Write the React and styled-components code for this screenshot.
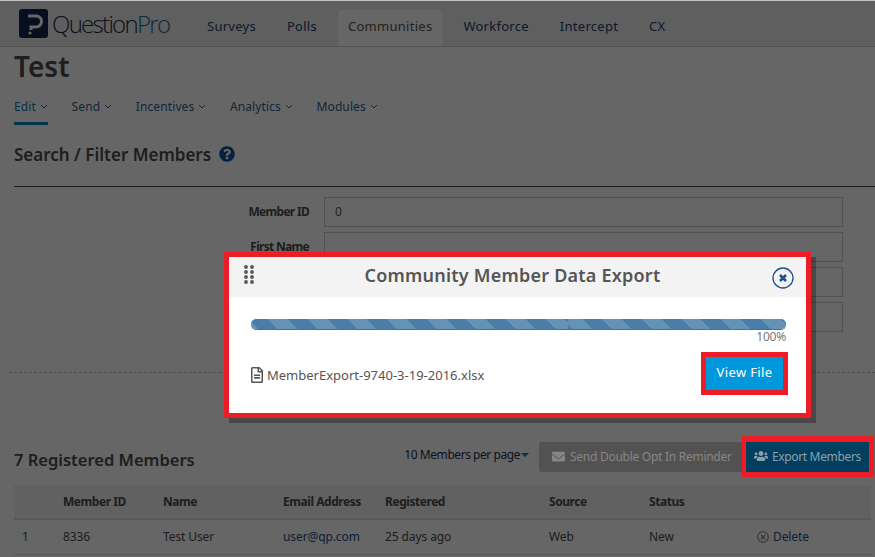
import React from 'react';
import styled, { createGlobalStyle } from 'styled-components';
import { FaEnvelope, FaQuestionCircle, FaRegFileAlt, FaRegTimesCircle, FaUsers } from 'react-icons/fa';

const GlobalStyle = createGlobalStyle`
  html, body {
    margin: 0;
    padding: 0;
    height: 100%;
    overflow: hidden;
    background: #666;
  }
  * {
    box-sizing: border-box;
  }
  body {
    font-family: "Noto Sans", "Open Sans", sans-serif;
    font-size: 12px;
    color: #3a3a3a;
  }
`;

const Page = styled.div`
  position: relative;
  width: 875px;
  height: 557px;
  overflow: hidden;
  background: #fff;
`;

const Content = styled.div`
  width: 875px;
`;

const TopEdge = styled.div`
  position: absolute;
  left: 0;
  top: 0;
  z-index: 2;
  width: 100%;
  height: 1px;
  background: #c4c4c4;
`;

const TopNav = styled.div`
  height: 46px;
  margin-top: 1px;
  display: flex;
  align-items: flex-end;
  padding-left: 19px;
  background: #eeeeee;
  border-bottom: 1px solid #cfcfcf;
`;

const Logo = styled.div`
  display: flex;
  align-items: center;
  width: 178px;
  height: 37px;
  padding-bottom: 9px;
  font-family: "Open Sans", sans-serif;
  font-size: 24px;
  font-weight: 300;
  letter-spacing: -1.7px;
  color: #1b2a4a;
  span {
    color: #1b6a9c;
  }
  svg {
    margin-right: 4px;
    flex-shrink: 0;
  }
`;

const NavItem = styled.div`
  height: 36px;
  padding: 0 10px 5px;
  margin-right: 11px;
  display: flex;
  align-items: center;
  font-size: 13px;
  letter-spacing: 0.27px;
  color: ${p => (p.$active ? '#555' : '#1d3f6e')};
  background: ${p => (p.$active ? '#fff' : 'transparent')};
  border-radius: 4px 4px 0 0;
`;

const Title = styled.h1`
  margin: 0;
  padding: 2px 0 0 14px;
  height: 40px;
  font-size: 28px;
  line-height: 34px;
  font-weight: 600;
  color: #4b4b4b;
`;

const SubNav = styled.div`
  display: flex;
  gap: 23.7px;
  height: 38px;
  padding: 0 0 0 14px;
`;

const SubItem = styled.div`
  height: 38px;
  display: flex;
  align-items: center;
  gap: 4px;
  padding-top: 3px;
  font-size: 12px;
  letter-spacing: 0.1px;
  color: ${p => (p.$active ? '#0f7ab5' : '#2f5e8e')};
  border-bottom: ${p => (p.$active ? '3px solid #0d80ba' : '3px solid transparent')};
`;

const SectionHead = styled.div`
  height: 62px;
  margin-left: 14px;
  display: flex;
  align-items: center;
  gap: 8px;
  border-bottom: 1px solid #444;
  padding-bottom: 3px;
  font-size: 17px;
  font-weight: 600;
  color: #4b4b4b;
  svg {
    color: #0f4f9c;
  }
`;

const Form = styled.div`
  display: flex;
  flex-direction: column;
  gap: 5px;
  margin-left: 9px;
  padding: 10px 32px 0 0;
  height: 186px;
  border-bottom: 1px dashed #c4c4c4;
`;

const FormRow = styled.div`
  display: flex;
  justify-content: flex-end;
  align-items: center;
  gap: 15px;
  height: 30px;
`;

const FieldLabel = styled.label`
  margin-top: -1px;
  font-size: 12px;
  font-weight: 700;
  letter-spacing: -0.7px;
  color: #4b4b4b;
`;

const Field = styled.div`
  width: 519px;
  height: 30px;
  padding: 5px 10px;
  border: 1px solid #ccc;
  font-size: 12px;
  line-height: 18px;
  color: #555;
`;

const MembersBar = styled.div`
  display: flex;
  align-items: center;
  height: 41px;
  margin-top: 63px;
  padding: 0 1px 0 14px;
`;

const MembersTitle = styled.h2`
  flex: 1;
  margin: 5px 0 0;
  font-size: 16.5px;
  font-weight: 600;
  color: #4b4b4b;
`;

const PerPage = styled.div`
  display: flex;
  align-items: center;
  margin: 0 10px 4px 0;
  font-size: 12px;
  letter-spacing: -0.45px;
  color: #1a3050;
  &::after {
    content: '';
    margin-left: 1px;
    border: 4px solid transparent;
    border-top-color: #0d80ba;
    border-bottom: 0;
  }
`;

const ReminderButton = styled.div`
  position: relative;
  z-index: 2;
  display: flex;
  align-items: center;
  gap: 5px;
  width: 203px;
  height: 30px;
  padding: 0 0 1px 13px;
  background: #525252;
  border-radius: 3px 0 0 3px;
  font-size: 12px;
  letter-spacing: -0.27px;
  color: #868686;
  white-space: nowrap;
`;

const ExportOutline = styled.div`
  position: relative;
  z-index: 2;
  border: 5px solid #ee1c25;
  border-width: 6px 5px 5px 4px;
  width: 132px;
  height: 41px;
`;

const ExportButton = styled.div`
  height: 100%;
  display: flex;
  align-items: center;
  gap: 4px;
  padding: 0 0 2px 8px;
  background: #003f5f;
  font-size: 12px;
  letter-spacing: -0.35px;
  color: #8aa0ae;
  white-space: nowrap;
`;

const Grid = styled.div`
  margin: 8px 4px 0 14px;
  font-size: 12px;
`;

const GridRow = styled.div`
  display: grid;
  grid-template-columns: 49px 100px 120px 102px 164px 100px 108px 1fr;
  align-items: center;
  height: 35px;
  padding-bottom: ${p => (p.$head ? 0 : 1)}px;
  background: ${p => (p.$head ? '#f2f2f2' : 'transparent')};
  border-bottom: ${p => (p.$head ? '2px solid #ddd' : '1px solid #ddd')};
  font-weight: ${p => (p.$head ? 700 : 400)};
  letter-spacing: ${p => (p.$head ? '-0.45px' : '-0.1px')};
  color: #4b4b4b;
`;

const FirstCell = styled.div`
  padding-left: 8px;
`;

const LinkCell = styled.div`
  display: flex;
  align-items: center;
  gap: 4px;
  color: #1d4f85;
  svg {
    color: #888;
  }
`;

const Backdrop = styled.div`
  position: absolute;
  inset: 0;
  background: rgba(0, 0, 0, 0.6);
`;

const Modal = styled.div`
  position: absolute;
  z-index: 3;
  left: 224px;
  top: 252px;
  width: 587px;
  height: 166px;
  border: 5px solid #ee1c25;
  background: #fff;
  box-shadow: 5px 5px 0 rgba(0, 0, 0, 0.28);
`;

const ModalHead = styled.div`
  position: relative;
  height: 40px;
  display: flex;
  align-items: center;
  justify-content: center;
  padding: 0 10px 4px 0;
  background: #f3f3f3;
  font-size: 18px;
  font-weight: 600;
  letter-spacing: 0.22px;
  color: #555;
`;

const DragHandle = styled.svg`
  position: absolute;
  left: 15px;
  top: 8px;
`;

const CloseIcon = styled.svg`
  position: absolute;
  right: 12px;
  top: 10px;
`;

const ModalBody = styled.div`
  padding: 22px 20px 0 22px;
`;

const Progress = styled.div`
  display: flex;
  height: 11px;
  overflow: hidden;
  border-radius: 5px;
  border-bottom: 1px solid #3d7199;
`;

const ProgressPart = styled.div`
  flex: ${p => (p.$second ? '1' : '0 0 317px')};
  background: ${p =>
    p.$second
      ? 'repeating-linear-gradient(45deg, #4a7ea8 0 3px, #6593b5 3px 17px, #4a7ea8 17px 28px)'
      : 'repeating-linear-gradient(45deg, #6593b5 0 5px, #4a7ea8 5px 19px, #6593b5 19px 28px)'};
`;

const Percent = styled.div`
  text-align: right;
  font-size: 12px;
  line-height: 14px;
  letter-spacing: -0.2px;
  color: #777;
`;

const FileRow = styled.div`
  display: flex;
  align-items: center;
  justify-content: space-between;
  margin-top: 8px;
`;

const FileName = styled.div`
  display: flex;
  align-items: center;
  gap: 2px;
  margin-top: 2px;
  font-size: 13px;
  color: #555;
  svg {
    flex-shrink: 0;
    margin-left: -2px;
  }
`;

const ViewOutline = styled.div`
  width: 87px;
  height: 43px;
  margin-right: -2px;
  border: 5px solid #ee1c25;
`;

const ViewButton = styled.div`
  height: 100%;
  display: flex;
  align-items: center;
  justify-content: center;
  padding-bottom: 3px;
  background: #0098dc;
  color: #fff;
  font-size: 13px;
  letter-spacing: 0.35px;
`;

const Chevron = () => (
  <svg width="8" height="5" viewBox="0 0 8 5" fill="none" stroke="currentColor" strokeWidth="1">
    <path d="M1 1l3 3 3-3" />
  </svg>
);

const subItems = [
  { label: 'Edit', active: true },
  { label: 'Send' },
  { label: 'Incentives' },
  { label: 'Analytics' },
  { label: 'Modules' },
];

export default function App() {
  return (
    <Page>
      <GlobalStyle />
      <TopEdge />
      <Content>
        <TopNav>
          <Logo>
            <svg width="29" height="29" viewBox="0 0 29 29">
              <rect width="29" height="29" rx="3" fill="#12254f" />
              <path d="M9 7h8a5 5 0 0 1 0 11h-5v3" fill="none" stroke="#fff" strokeWidth="3" />
              <circle cx="11" cy="24" r="1.6" fill="#fff" />
            </svg>
            Question<span>Pro</span>
          </Logo>
          <NavItem>Surveys</NavItem>
          <NavItem>Polls</NavItem>
          <NavItem $active>Communities</NavItem>
          <NavItem>Workforce</NavItem>
          <NavItem>Intercept</NavItem>
          <NavItem>CX</NavItem>
        </TopNav>
        <Title>Test</Title>
        <SubNav>
          {subItems.map(item => (
            <SubItem key={item.label} $active={item.active}>
              {item.label}
              <Chevron />
            </SubItem>
          ))}
        </SubNav>
        <SectionHead>
          Search / Filter Members
          <FaQuestionCircle size={16} />
        </SectionHead>
        <Form>
          <FormRow>
            <FieldLabel>Member ID</FieldLabel>
            <Field>0</Field>
          </FormRow>
          <FormRow>
            <FieldLabel>First Name</FieldLabel>
            <Field />
          </FormRow>
          <FormRow>
            <FieldLabel>Last Name</FieldLabel>
            <Field />
          </FormRow>
          <FormRow>
            <FieldLabel>Email</FieldLabel>
            <Field />
          </FormRow>
        </Form>
        <MembersBar>
          <MembersTitle>7 Registered Members</MembersTitle>
          <PerPage>10 Members per page</PerPage>
          <ReminderButton>
            <FaEnvelope size={13} />
            Send Double Opt In Reminder
          </ReminderButton>
          <ExportOutline>
            <ExportButton>
              <FaUsers size={14} />
              Export Members
            </ExportButton>
          </ExportOutline>
        </MembersBar>
        <Grid>
          <GridRow $head>
            <span />
            <span>Member ID</span>
            <span>Name</span>
            <span>Email Address</span>
            <span>Registered</span>
            <span>Source</span>
            <span>Status</span>
          </GridRow>
          <GridRow>
            <FirstCell>1</FirstCell>
            <span>8336</span>
            <span>Test User</span>
            <LinkCell>user@qp.com</LinkCell>
            <span>25 days ago</span>
            <span>Web</span>
            <span>New</span>
            <LinkCell>
              <FaRegTimesCircle size={12} />
              Delete
            </LinkCell>
          </GridRow>
        </Grid>
      </Content>
      <Backdrop />
      <Modal>
        <ModalHead>
          <DragHandle width="10" height="19" viewBox="0 0 10 19" fill="#555">
            {[2, 7, 12, 17].map(y => (
              <React.Fragment key={y}>
                <circle cx="2" cy={y} r="1.9" />
                <circle cx="8" cy={y} r="1.9" />
              </React.Fragment>
            ))}
          </DragHandle>
          Community Member Data Export
          <CloseIcon width="22" height="22" viewBox="0 0 22 22" fill="none" stroke="#1d4f8f">
            <circle cx="11" cy="11" r="10" strokeWidth="1.3" />
            <path d="M8 8l6 6M14 8l-6 6" strokeWidth="2.6" />
          </CloseIcon>
        </ModalHead>
        <ModalBody>
          <Progress>
            <ProgressPart />
            <ProgressPart $second />
          </Progress>
          <Percent>100%</Percent>
          <FileRow>
            <FileName>
              <FaRegFileAlt size={16} />
              MemberExport-9740-3-19-2016.xlsx
            </FileName>
            <ViewOutline>
              <ViewButton>View File</ViewButton>
            </ViewOutline>
          </FileRow>
        </ModalBody>
      </Modal>
    </Page>
  );
}
